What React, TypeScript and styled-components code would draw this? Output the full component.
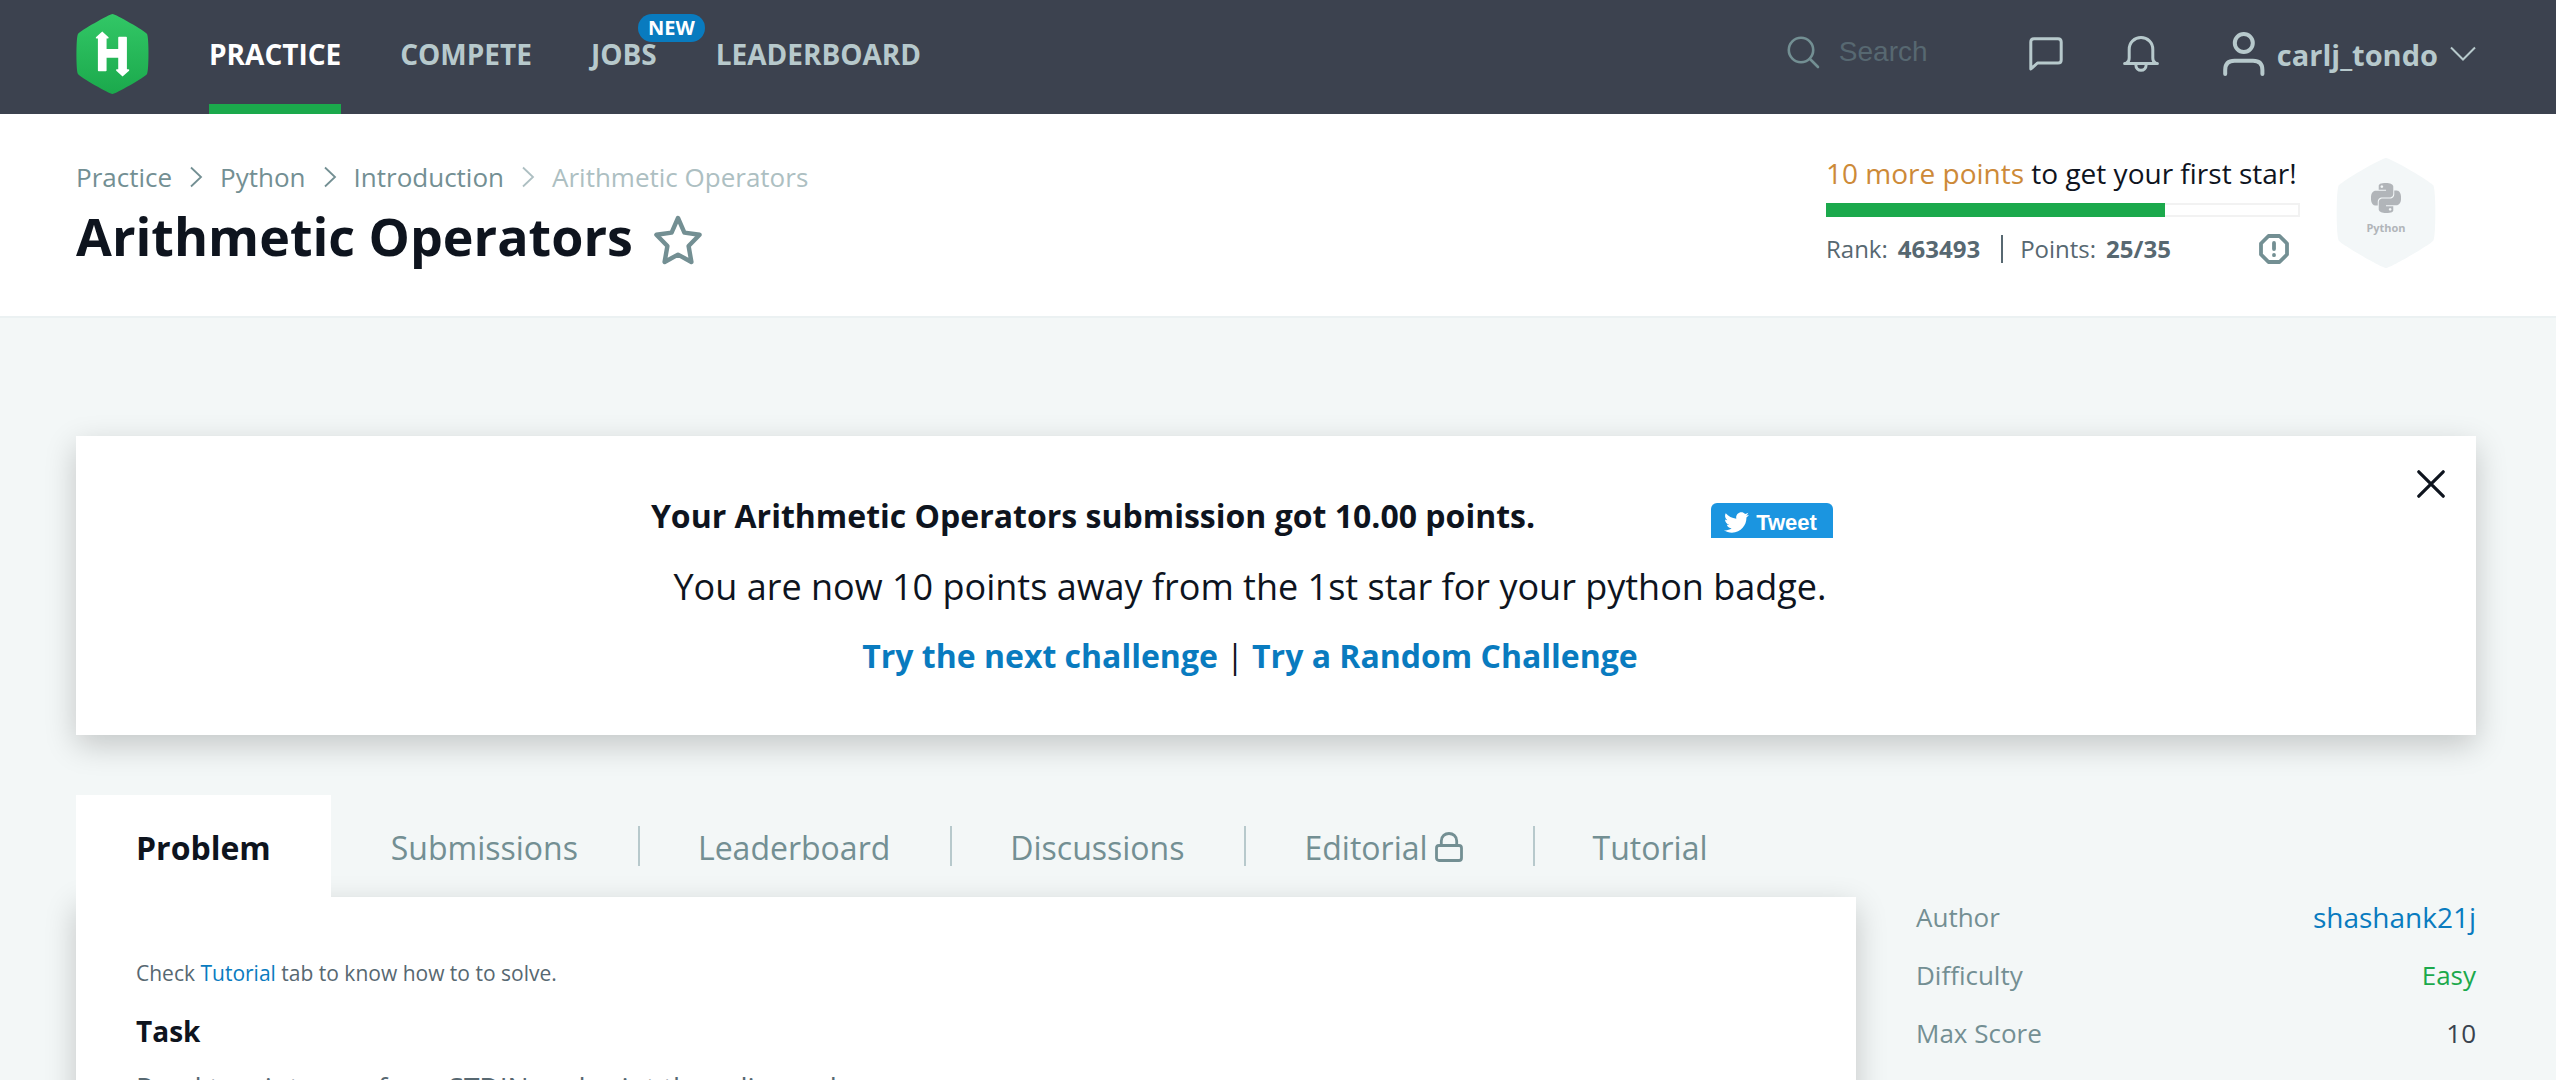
import React from "react";
import styled, { createGlobalStyle } from "styled-components";
import { FaTwitter } from "react-icons/fa";
import { SiPython } from "react-icons/si";

const c = {
  nav: "#39424e",
  navBg: "#3c424f",
  mist: "#b7c9cc",
  teal: "#738f93",
  slate: "#576871",
  ink: "#0e141e",
  green: "#1ba94c",
  blue: "#097bbf",
  page: "#f3f7f7",
  line: "#ebf1f2",
  copper: "#cd8a38",
};

const GlobalStyle = createGlobalStyle`
  *, *::before, *::after { box-sizing: border-box; }
  body {
    margin: 0;
    background: ${c.page};
    color: ${c.ink};
    font-family: "Open Sans", "Noto Sans", sans-serif;
  }
  a { text-decoration: none; color: inherit; }
  button { font: inherit; color: inherit; border: 0; background: none; padding: 0; cursor: pointer; }
  h1, h2, p, ol, ul, dl, dd { margin: 0; padding: 0; }
  svg { display: block; flex: none; }
`;

const Shell = styled.div`
  height: 100vh;
  overflow: hidden;
`;

/* Top bar */
const TopBar = styled.header`
  display: flex;
  height: 114px;
  padding: 0 80px 0 76px;
  background: ${c.navBg};
  color: ${c.mist};
  font-size: 28px;
  font-weight: 700;
`;

const Logo = styled.a`
  display: flex;
  align-items: center;
  padding-bottom: 6px;
  margin-right: 60px;
`;

const Nav = styled.nav`
  display: flex;
  gap: 59px;
`;

const NavLink = styled.a<{ $active?: boolean }>`
  position: relative;
  display: flex;
  align-items: center;
  padding-top: 4px;
  border-bottom: 10px solid ${(p) => (p.$active ? c.green : "transparent")};
  color: ${(p) => (p.$active ? "#fff" : c.mist)};
`;

const NewBadge = styled.span`
  position: absolute;
  top: 14px;
  left: 47px;
  padding: 0 10px;
  border-radius: 14px;
  background: ${c.blue};
  color: #fff;
  font-size: 20px;
  line-height: 28px;
`;

const Tools = styled.div`
  display: flex;
  align-items: center;
  margin-left: auto;
  padding-bottom: 6px;
`;

const SearchBox = styled.label`
  display: flex;
  align-items: center;
  gap: 19px;
  padding-bottom: 4px;
  color: ${c.teal};
`;

const SearchInput = styled.input`
  width: 190px;
  padding: 0;
  border: 0;
  outline: 0;
  background: transparent;
  color: ${c.mist};
  font-family: "Liberation Sans", Arial, sans-serif;
  font-size: 28px;
  &::placeholder { color: ${c.slate}; opacity: 1; }
`;

const ToolButton = styled.button`
  display: flex;
  margin-right: 60px;
`;

const UserButton = styled.button`
  display: flex;
  align-items: center;
  gap: 12px;
  margin-left: 4px;
  font-size: 29px;
  font-weight: 700;
`;

/* Page heading */
const Heading = styled.section`
  display: flex;
  justify-content: space-between;
  align-items: flex-start;
  padding: 44px 120px 44px 76px;
  background: #fff;
  border-bottom: 2px solid ${c.line};
`;

const Crumbs = styled.ol`
  display: flex;
  align-items: center;
  gap: 17px;
  list-style: none;
  color: ${c.teal};
  font-size: 26px;
  line-height: 38px;
`;

const Crumb = styled.li<{ $current?: boolean }>`
  display: flex;
  align-items: center;
  gap: 17px;
  color: ${(p) => (p.$current ? "#adbfc2" : "inherit")};
`;

const TitleRow = styled.div`
  display: flex;
  align-items: center;
  gap: 20px;
  margin-top: 4px;
  color: ${c.teal};
`;

const Title = styled.h1`
  color: ${c.ink};
  font-size: 52px;
  line-height: 72px;
  font-weight: 700;
`;

const Bookmark = styled.button`
  padding-top: 8px;
`;

const Standing = styled.div`
  display: flex;
  gap: 36px;
`;

const Score = styled.div`
  width: 474px;
`;

const Goal = styled.p`
  font-size: 28px;
  line-height: 30px;
  white-space: nowrap;
  span { color: ${c.copper}; }
`;

const Track = styled.div`
  margin: 15px 0 16px;
  box-shadow: inset 0 0 0 2px #f2f2f2;
`;

const Fill = styled.div`
  height: 14px;
  background: ${c.green};
`;

const Stats = styled.div`
  display: flex;
  align-items: center;
  color: ${c.slate};
  font-size: 24px;
  line-height: 30px;
  b { margin-left: 10px; }
`;

const StatRule = styled.span`
  width: 2px;
  height: 28px;
  margin: 0 17px 0 21px;
  background: ${c.slate};
`;

const InfoButton = styled.button`
  margin: 0 10px 0 auto;
  color: ${c.teal};
`;

const Badge = styled.div`
  display: grid;
  width: 100px;
  > * { grid-area: 1 / 1; }
`;

const BadgeLabel = styled.div`
  display: flex;
  flex-direction: column;
  align-items: center;
  gap: 7px;
  padding-top: 25px;
  color: #b1b5b9;
  font-size: 11px;
  line-height: 16px;
  font-weight: 700;
`;

/* Main */
const Main = styled.main`
  padding: 118px 80px 60px 76px;
`;

const shadow = "0 10px 30px rgba(0, 0, 0, 0.2)";

const Banner = styled.section`
  position: relative;
  padding: 58px 52px 57px 0;
  background: #fff;
  box-shadow: ${shadow};
  text-align: center;
`;

const BannerHead = styled.div`
  display: flex;
  justify-content: center;
  align-items: flex-end;
  gap: 176px;
  padding-right: 16px;
`;

const BannerTitle = styled.h2`
  font-size: 32px;
  line-height: 44px;
  font-weight: 700;
`;

const Tweet = styled.button`
  display: flex;
  align-items: center;
  gap: 7px;
  width: 122px;
  height: 35px;
  padding: 4px 0 0 13px;
  border-radius: 6px 6px 0 0;
  background: #1b95e0;
  color: #fff;
  font-family: "Liberation Sans", Arial, sans-serif;
  font-size: 22px;
  font-weight: 700;
`;

const BannerText = styled.p`
  margin: 24px 0 22px;
  font-size: 36px;
  line-height: 50px;
`;

const BannerLinks = styled.p`
  font-size: 32px;
  line-height: 44px;
  a { color: ${c.blue}; font-weight: 700; }
`;

const Close = styled.button`
  position: absolute;
  top: 34px;
  right: 31px;
  color: ${c.ink};
`;

const Columns = styled.div`
  display: grid;
  grid-template-columns: minmax(0, 1fr) 560px;
  gap: 60px;
  margin-top: 60px;
`;

const Tabs = styled.div`
  display: flex;
  align-items: center;
`;

const Tab = styled.button<{ $active?: boolean }>`
  position: relative;
  z-index: 1;
  display: flex;
  align-items: center;
  gap: 7px;
  height: 102px;
  padding: 2px 60px 0;
  background: ${(p) => (p.$active ? "#fff" : "transparent")};
  color: ${(p) => (p.$active ? c.ink : c.teal)};
  font-size: 32px;
  font-weight: ${(p) => (p.$active ? 700 : 400)};
  svg { margin-right: 10px; }
`;

const TabRule = styled.span`
  width: 2px;
  height: 40px;
  margin-right: -2px;
  background: ${c.mist};
`;

const Panel = styled.article`
  min-height: 600px;
  padding: 60px;
  background: #fff;
  box-shadow: ${shadow};
  color: ${c.slate};
`;

const Hint = styled.p`
  font-size: 21px;
  line-height: 32px;
  a { color: ${c.blue}; }
`;

const TaskTitle = styled.h2`
  margin: 20px 0 14px;
  color: ${c.ink};
  font-size: 28px;
  line-height: 44px;
  font-weight: 700;
`;

const TaskText = styled.p`
  font-size: 28px;
  line-height: 40px;
`;

const Facts = styled.dl`
  padding-top: 93px;
`;

const Fact = styled.div`
  display: flex;
  justify-content: space-between;
  align-items: center;
  height: 58px;
  font-size: 26px;
  dt { color: ${c.teal}; }
`;

const FactValue = styled.dd<{ $tone: string; $large?: boolean }>`
  color: ${(p) => p.$tone};
  font-size: ${(p) => (p.$large ? 28 : 26)}px;
`;

const hexPath =
  "M37 0C40 0 70 17 72 20C74 23 74 57 72 60C70 63 40 80 37 80C34 80 4 63 2 60C0 57 0 23 2 20C4 17 34 0 37 0Z";

const HackerLogo = () => (
  <svg width="73" height="80" viewBox="0 0 74 80" preserveAspectRatio="none">
    <defs>
      <linearGradient id="logoFill" x1="0" y1="0" x2="0" y2="1">
        <stop offset="0" stopColor="#32c766" />
        <stop offset="1" stopColor="#1ba94c" />
      </linearGradient>
    </defs>
    <path d={hexPath} fill="url(#logoFill)" />
    <path
      fill="#fff"
      d="M26.6 17.6L33 23.2Q33.6 24.6 32 24.6H31V35H42.8V23.5Q42.8 22.7 43.6 22.7H50.8Q51.6 22.7 51.6 23.5V55.3H53.2Q54.6 55.6 53.8 56.8L47.2 62.4L40.8 56.8Q40 55.6 41.4 55.3H42.8V43.8H31V56.4Q31 57.2 30.2 57.2H23Q22.2 57.2 22.2 56.4V24.6H21Q19.6 24.4 20.2 23.2Z"
    />
  </svg>
);

const CrumbArrow = () => (
  <svg width="14" height="22" viewBox="0 0 14 22" fill="none" stroke="currentColor" strokeWidth="1.8">
    <path d="M2 1.5L12 11L2 20.5" />
  </svg>
);

const stroke = {
  fill: "none",
  stroke: "currentColor",
  strokeLinecap: "round" as const,
  strokeLinejoin: "round" as const,
};

const tabs = ["Submissions", "Leaderboard", "Discussions", "Editorial", "Tutorial"];

export default function App() {
  return (
    <Shell>
      <GlobalStyle />
      <TopBar>
        <Logo href="#" aria-label="Home">
          <HackerLogo />
        </Logo>
        <Nav>
          <NavLink href="#" $active>PRACTICE</NavLink>
          <NavLink href="#">COMPETE</NavLink>
          <NavLink href="#">
            JOBS
            <NewBadge>NEW</NewBadge>
          </NavLink>
          <NavLink href="#">LEADERBOARD</NavLink>
        </Nav>
        <Tools>
          <SearchBox>
            <svg width="33" height="33" viewBox="0 0 33 33" {...stroke} strokeWidth="2.6">
              <circle cx="14" cy="14" r="12.2" />
              <path d="M23 23L31 31" />
            </svg>
            <SearchInput type="text" placeholder="Search" aria-label="Search" />
          </SearchBox>
          <ToolButton aria-label="Messages">
            <svg width="34" height="34" viewBox="0 0 34 34" {...stroke} strokeWidth="3">
              <path d="M1.8 32V5Q1.8 1.8 5 1.8H29Q32.2 1.8 32.2 5V23Q32.2 26 29 26H8.5Z" />
            </svg>
          </ToolButton>
          <ToolButton aria-label="Notifications">
            <svg width="36" height="36" viewBox="0 0 36 36" {...stroke} strokeWidth="3">
              <path d="M1.6 27.4H34.4M3.5 27Q6.2 26 6.2 22V13.5C6.2 6.5 11.5 1.6 18 1.6S29.8 6.5 29.8 13.5V22Q29.8 26 32.5 27M12.8 28.5C12.8 36.2 23.2 36.2 23.2 28.5" />
            </svg>
          </ToolButton>
          <UserButton>
            <svg width="42" height="44" viewBox="0 0 42 44" {...stroke} strokeWidth="4">
              <circle cx="20.8" cy="11" r="9" />
              <path d="M2.2 42V38Q2.2 28.8 11.5 28.8H30Q39.4 28.8 39.4 38V42" />
            </svg>
            carlj_tondo
            <svg width="26" height="16" viewBox="0 0 26 16" fill="none" stroke="currentColor" strokeWidth="2">
              <path d="M1 1.5L13 13.5L25 1.5" />
            </svg>
          </UserButton>
        </Tools>
      </TopBar>

      <Heading>
        <div>
          <nav aria-label="Breadcrumb">
            <Crumbs>
              <Crumb><a href="#">Practice</a><CrumbArrow /></Crumb>
              <Crumb><a href="#">Python</a><CrumbArrow /></Crumb>
              <Crumb><a href="#">Introduction</a></Crumb>
              <Crumb $current><CrumbArrow />Arithmetic Operators</Crumb>
            </Crumbs>
          </nav>
          <TitleRow>
            <Title>Arithmetic Operators</Title>
            <Bookmark aria-label="Bookmark">
              <svg width="50" height="50" viewBox="0 0 50 50" {...stroke} strokeWidth="4.4">
                <path d="M25 3L31.4 17.6L46.6 19.8L35.6 31L38.4 47L25 39.6L11.6 47L14.4 31L3.4 19.8L18.6 17.6Z" />
              </svg>
            </Bookmark>
          </TitleRow>
        </div>
        <Standing>
          <Score>
            <Goal><span>10 more points</span> to get your first star!</Goal>
            <Track>
              <Fill style={{ width: `${(25 / 35) * 100}%` }} />
            </Track>
            <Stats>
              Rank: <b>463493</b>
              <StatRule />
              Points: <b>25/35</b>
              <InfoButton aria-label="Score details">
                <svg width="32" height="32" viewBox="0 0 32 32" {...stroke} strokeWidth="3.8">
                  <path d="M10.5 3H21.5L29 10.5V21.5L21.5 29H10.5L3 21.5V10.5Z" />
                  <path d="M16 10V16M16 22V22.2" />
                </svg>
              </InfoButton>
            </Stats>
          </Score>
          <Badge>
            <svg width="100" height="110" viewBox="0 0 74 80" preserveAspectRatio="none">
              <path d={hexPath} fill="#f3f7f8" />
            </svg>
            <BadgeLabel>
              <SiPython size={30} />
              Python
            </BadgeLabel>
          </Badge>
        </Standing>
      </Heading>

      <Main>
        <Banner>
          <BannerHead>
            <BannerTitle>Your Arithmetic Operators submission got 10.00 points.</BannerTitle>
            <Tweet>
              <FaTwitter size={25} />
              Tweet
            </Tweet>
          </BannerHead>
          <BannerText>You are now 10 points away from the 1st star for your python badge.</BannerText>
          <BannerLinks>
            <a href="#">Try the next challenge</a> | <a href="#">Try a Random Challenge</a>
          </BannerLinks>
          <Close aria-label="Close">
            <svg width="28" height="28" viewBox="0 0 28 28" {...stroke} strokeWidth="3.2">
              <path d="M1.8 1.8L26.2 26.2M26.2 1.8L1.8 26.2" />
            </svg>
          </Close>
        </Banner>

        <Columns>
          <div>
            <Tabs>
              <Tab $active>Problem</Tab>
              {tabs.map((name, i) => (
                <React.Fragment key={name}>
                  {i > 0 && <TabRule />}
                  <Tab>
                    {name}
                    {name === "Editorial" && (
                      <svg width="28" height="30" viewBox="0 0 28 30" {...stroke} strokeWidth="2.8">
                        <rect x="1.5" y="13.5" width="25" height="15" rx="2.5" />
                        <path d="M6.3 13V9C6.3 -1 21.7 -1 21.7 9V13" />
                      </svg>
                    )}
                  </Tab>
                </React.Fragment>
              ))}
            </Tabs>
            <Panel>
              <Hint>Check <a href="#">Tutorial</a> tab to know how to to solve.</Hint>
              <TaskTitle>Task</TaskTitle>
              <TaskText>Read two integers from STDIN and print three lines where:</TaskText>
            </Panel>
          </div>
          <Facts>
            <Fact>
              <dt>Author</dt>
              <FactValue $tone={c.blue} $large><a href="#">shashank21j</a></FactValue>
            </Fact>
            <Fact>
              <dt>Difficulty</dt>
              <FactValue $tone={c.green}>Easy</FactValue>
            </Fact>
            <Fact>
              <dt>Max Score</dt>
              <FactValue $tone={c.nav}>10</FactValue>
            </Fact>
          </Facts>
        </Columns>
      </Main>
    </Shell>
  );
}
